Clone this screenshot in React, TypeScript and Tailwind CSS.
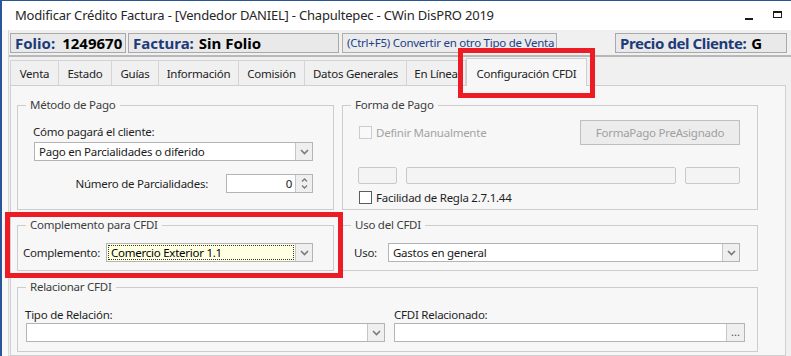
import React from 'react';

const font = "font-['Noto_Sans',sans-serif]";
const txt = 'text-[11.5px] tracking-[-0.25px]';

function Chevron() {
  return (
    <svg width="9" height="6" viewBox="0 0 9 6">
      <path d="M1 1 L4.5 4.5 L8 1" fill="none" stroke="#7a7a7a" strokeWidth="1.6" />
    </svg>
  );
}

function Combo({ value, className, tinted }: { value?: string; className: string; tinted?: boolean }) {
  return (
    <div className={`flex h-[19px] border border-[#b4b4b4] ${tinted ? 'bg-[#ffffe1]' : 'bg-white'} ${className}`}>
      <div className="flex-1 flex items-center px-[1px] min-w-0">
        {tinted ? (
          <div className={`flex-1 h-[15px] border border-dotted border-[#333] flex items-center pl-[2px] ${txt} text-black leading-none`}>
            {value}
          </div>
        ) : (
          <span className={`pl-[3px] ${txt} text-[#1a1a1a] leading-none`}>{value}</span>
        )}
      </div>
      <div className="w-[17px] border-l border-[#c6c6c6] bg-[#efefef] flex items-center justify-center">
        <Chevron />
      </div>
    </div>
  );
}

function Group({ title, className, children }: { title: string; className: string; children?: React.ReactNode }) {
  return (
    <fieldset className={`border border-[#cdcdcd] ${className}`}>
      <legend className={`ml-[8px] px-[4px] ${txt} leading-[16px] text-[#3d3d3d]`}>{title}</legend>
      {children}
    </fieldset>
  );
}

function Check({ disabled, label }: { disabled?: boolean; label: string }) {
  return (
    <div className="flex items-center gap-[4px]">
      <div className={`w-[13px] h-[13px] border ${disabled ? 'border-[#cccccc] bg-[#f9f9f9]' : 'border-[#5c5c5c] bg-white'}`} />
      <span className={`${txt} leading-none ${disabled ? 'text-[#a3a3a3]' : 'text-[#1f1f1f]'}`}>{label}</span>
    </div>
  );
}

const tabs = [
  { label: 'Venta', w: 'w-[48px]' },
  { label: 'Estado', w: 'w-[53px]' },
  { label: 'Guías', w: 'w-[47px]' },
  { label: 'Información', w: 'w-[80px]' },
  { label: 'Comisión', w: 'w-[66px]' },
  { label: 'Datos Generales', w: 'w-[102px]' },
  { label: 'En Línea', w: 'w-[60px]' },
];

export default function App() {
  return (
    <div className={`w-[791px] h-[356px] overflow-hidden flex flex-col bg-[#f8f8f8] border-t border-l-2 border-[#2a5699] ${font}`}>
      {/* title bar */}
      <div className="h-[29px] bg-white flex items-center shrink-0">
        <span className="pl-[13px] text-[13px] tracking-[-0.2px] text-[#262626] leading-none">
          Modificar Crédito Factura - [Vendedor DANIEL] - Chapultepec - CWin DisPRO 2019
        </span>
        <div className="ml-auto flex items-center">
          <div className="w-[8px] h-[2px] bg-[#1a1a1a] mt-[6px]" />
          <div className="ml-[20px] mr-[9px] w-[9px] h-[7px] border border-t-2 border-[#1a1a1a] -mt-[2px]" />
        </div>
      </div>

      <div className="flex-1 ml-[6px] bg-[#f0f0f0] border-l border-[#d6d6d6] flex flex-col">
        {/* header strip */}
        <div className="mt-[3px] h-[20px] flex shrink-0">
          <div className="ml-[1px] w-[116px] border border-[#a9a9a9] bg-[#e9e9e9] flex items-center pl-[4px] gap-[7px] text-[15px] font-bold leading-none">
            <span className="text-[#1d3b7a]">Folio:</span>
            <span className="text-black">1249670</span>
          </div>
          <div className="ml-[2px] w-[211px] border border-[#a9a9a9] bg-[#e9e9e9] flex items-center pl-[4px] gap-[5px] text-[15px] font-bold leading-none">
            <span className="text-[#1d3b7a]">Factura:</span>
            <span className="text-black">Sin Folio</span>
          </div>
          <div className={`ml-[3px] w-[215px] border border-[#adadad] bg-[#ebebeb] flex items-center pl-[4px] overflow-hidden whitespace-nowrap ${txt} text-[#20408a] leading-none`}>
            (Ctrl+F5) Convertir en otro Tipo de Venta
          </div>
          <div className="ml-[58px] w-[172px] border border-[#a9a9a9] bg-[#e9e9e9] flex items-center pl-[4px] gap-[5px] text-[15px] tracking-[-0.4px] font-bold leading-none">
            <span className="text-[#1d3b7a]">Precio del Cliente:</span>
            <span className="text-black">G</span>
          </div>
        </div>

        {/* tab control */}
        <div className="mt-[2px] border-t-2 border-[#b8b8b8] flex-1 flex flex-col">
          <div className="h-[28px] flex items-end pl-[1px] shrink-0">
            {tabs.map((t, i) => (
              <div
                key={t.label}
                className={`${t.w} h-[25px] border-t border-l ${i === tabs.length - 1 ? 'border-r' : ''} border-[#d4d4d4] flex items-center justify-center ${txt} text-[#222] leading-none pt-[2px]`}
              >
                {t.label}
              </div>
            ))}
            <div className={`relative z-10 w-[121px] h-[28px] -mb-px border border-b-0 border-[#cfcfcf] bg-[#f7f7f7] flex items-center justify-center ${txt} text-[#222] leading-none pt-[2px]`}>
              Configuración CFDI
              <div className="absolute -left-[9px] -top-[11px] w-[137px] h-[50px] border-[5px] border-[#ed1c24]" />
            </div>
          </div>

          <div className="ml-[1px] w-[776px] flex-1 border border-[#cfcfcf] bg-[#f7f7f7] pt-[11px] pl-[6px]">
            {/* row 1 */}
            <div className="flex">
              <Group title="Método de Pago" className="w-[317px] h-[113px]">
                <div className={`pl-[15px] mt-[11px] ${txt} leading-[16px] text-[#1f1f1f]`}>Cómo pagará el cliente:</div>
                <Combo value="Pago en Parcialidades o diferido" className="ml-[16px] mt-[2px] w-[279px]" />
                <div className="ml-[15px] mt-[13px] w-[280px] flex items-center justify-end gap-[18px]">
                  <span className={`${txt} leading-none text-[#1f1f1f]`}>Número de Parcialidades:</span>
                  <div className="w-[87px] h-[19px] flex border border-[#b4b4b4] bg-white">
                    <div className={`flex-1 flex items-center justify-end pr-[3px] ${txt} leading-none text-[#1a1a1a]`}>0</div>
                    <div className="w-[17px] border-l border-[#c6c6c6] bg-[#efefef] flex flex-col items-center justify-center gap-[3px]">
                      <svg width="7" height="4" viewBox="0 0 7 4">
                        <path d="M1 3.5 L3.5 1 L6 3.5" fill="none" stroke="#7a7a7a" strokeWidth="1.3" />
                      </svg>
                      <svg width="7" height="4" viewBox="0 0 7 4">
                        <path d="M1 0.5 L3.5 3 L6 0.5" fill="none" stroke="#7a7a7a" strokeWidth="1.3" />
                      </svg>
                    </div>
                  </div>
                </div>
              </Group>

              <Group title="Forma de Pago" className="ml-[8px] w-[416px] h-[113px]">
                <div className="mt-[7px] pl-[16px] pr-[17px] h-[25px] flex items-center">
                  <Check disabled label="Definir Manualmente" />
                  <div className={`ml-auto w-[160px] h-[25px] border border-[#bfbfbf] bg-[#ececec] flex items-center justify-center ${txt} leading-none text-[#a0a0a0]`}>
                    FormaPago PreAsignado
                  </div>
                </div>
                <div className="mt-[22px] pl-[15px] flex gap-[9px]">
                  <div className="w-[39px] h-[17px] rounded-[2px] border border-[#c9c9c9] bg-[#f4f4f4]" />
                  <div className="w-[270px] h-[17px] rounded-[2px] border border-[#c9c9c9] bg-[#f4f4f4]" />
                  <div className="w-[55px] h-[17px] rounded-[2px] border border-[#c9c9c9] bg-[#f4f4f4]" />
                </div>
                <div className="mt-[7px] pl-[16px]">
                  <Check label="Facilidad de Regla 2.7.1.44" />
                </div>
              </Group>
            </div>

            {/* row 2 */}
            <div className="flex mt-[7px]">
              <div className="relative">
                <Group title="Complemento para CFDI" className="w-[317px] h-[54px]">
                  <div className="mt-[10px] pl-[5px] pr-[20px] flex items-center justify-between">
                    <span className={`${txt} leading-none text-[#1f1f1f]`}>Complemento:</span>
                    <Combo value="Comercio Exterior 1.1" tinted className="w-[207px]" />
                  </div>
                </Group>
                <div className="absolute -left-[12px] -top-[5px] w-[338px] h-[66px] border-[5px] border-[#ed1c24]" />
              </div>

              <Group title="Uso del CFDI" className="ml-[8px] w-[416px] h-[54px]">
                <div className="mt-[10px] pl-[11px] pr-[17px] flex items-center justify-between">
                  <span className={`${txt} leading-none text-[#1f1f1f]`}>Uso:</span>
                  <Combo value="Gastos en general" className="w-[352px]" />
                </div>
              </Group>
            </div>

            {/* row 3 */}
            <Group title="Relacionar CFDI" className="mt-[8px] w-[741px] h-[73px]">
              <div className="mt-[12px] flex">
                <div className="ml-[8px] w-[359px]">
                  <div className={`-ml-[1px] ${txt} leading-[16px] text-[#1f1f1f]`}>Tipo de Relación:</div>
                  <Combo className="w-[359px]" />
                </div>
                <div className="ml-[9px] w-[351px]">
                  <div className={`${txt} leading-[16px] text-[#1f1f1f]`}>CFDI Relacionado:</div>
                  <div className="h-[19px] flex border border-[#b4b4b4] bg-white">
                    <div className="flex-1" />
                    <div className="w-[18px] border-l border-[#c6c6c6] bg-[#efefef] flex items-center justify-center text-[11px] leading-none text-[#555] pb-[3px]">
                      ...
                    </div>
                  </div>
                </div>
              </div>
            </Group>
          </div>
        </div>
      </div>
    </div>
  );
}
